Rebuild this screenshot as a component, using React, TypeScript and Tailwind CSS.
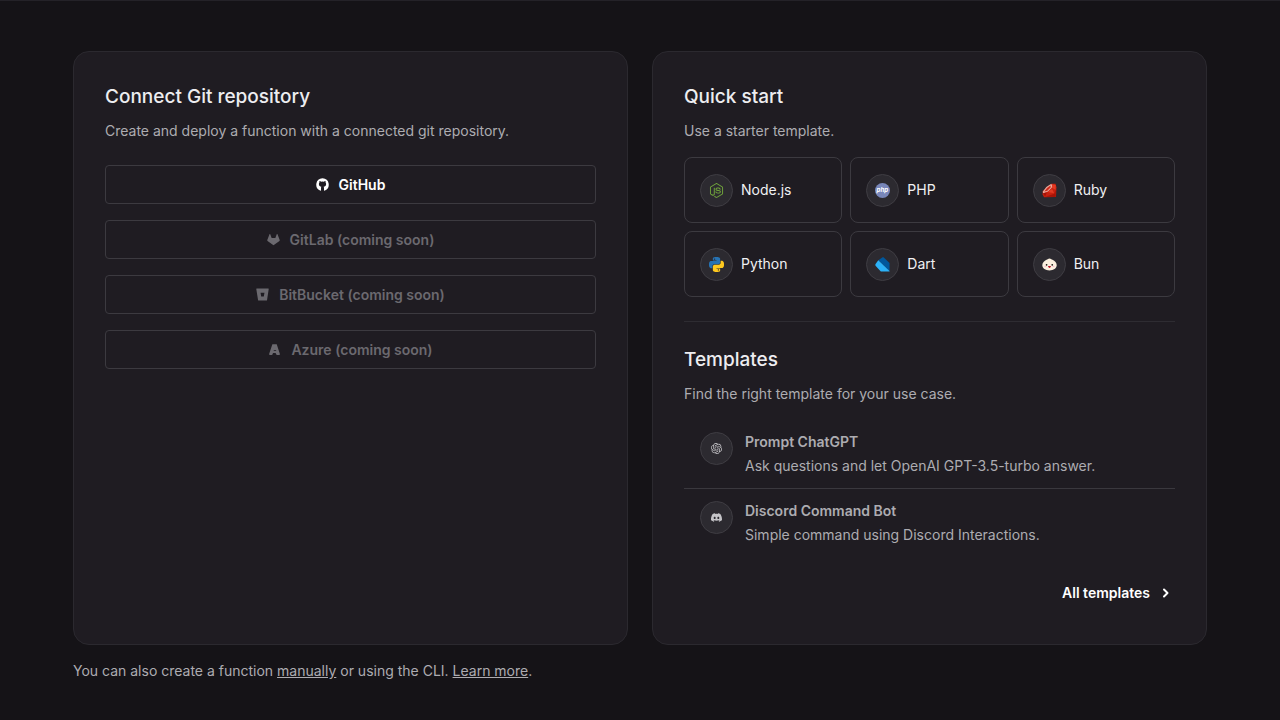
import type { ReactNode } from 'react';
import { FaNodeJs } from 'react-icons/fa';
import { SiDiscord, SiOpenai } from 'react-icons/si';

const PYTHON_SNAKE =
  'M14.25.18l.9.2.73.26.59.3.45.32.34.34.25.34.16.33.1.3.04.26.02.2-.01.13V8.5l-.05.63-.13.55-.21.46-.26.38-.3.31-.33.25-.35.19-.35.14-.33.1-.3.07-.26.04-.21.02H8.77l-.69.05-.59.14-.5.22-.41.27-.33.32-.27.35-.2.36-.15.37-.1.35-.07.32-.04.27-.02.21v3.06H3.17l-.21-.03-.28-.07-.32-.12-.35-.18-.36-.26-.36-.36-.35-.46-.32-.59-.28-.73-.21-.88-.14-1.05-.05-1.23.06-1.22.16-1.04.24-.87.32-.71.36-.57.4-.44.42-.33.42-.24.4-.16.36-.1.32-.05.24-.01h.16l.06.01h8.16v-.83H6.18l-.01-2.75-.02-.37.05-.34.11-.31.17-.28.25-.26.31-.23.38-.2.44-.18.51-.15.58-.12.64-.1.71-.06.77-.04.84-.02 1.27.05z';

function GithubIcon() {
  return (
    <svg viewBox="0 0 14 14" className="size-[13px]" fill="currentColor" aria-hidden="true">
      <path d="M7 .2a6.9 6.9 0 0 0-2.1 13.4c.3.1.5-.1.5-.4v-2.6c0-.5.2-.9.4-1.1-1.5-.2-2.7-.9-2.7-3 0-.7.2-1.2.6-1.6-.1-.5-.1-1.1.1-1.6.7 0 1.3.3 1.8.7a5.500 5.500 0 0 1 2.800 0c.5-.4 1.100-.7 1.800-.7.2.5.2 1.100.1 1.600.4.4.6.900.6 1.600 0 2.100-1.200 2.800-2.700 3 .2.200.4.600.4 1.100v2.600c0 .3.200.5.5.4A6.900 6.900 0 0 0 7 .2z" />
    </svg>
  );
}

function GitlabIcon() {
  return (
    <svg viewBox="0 0 14 14" className="size-[13px]" fill="currentColor" aria-hidden="true">
      <path d="M2.700 1.400c.2-.4.6-.4.8 0l1.500 3.900h4l1.500-3.900c.2-.4.6-.4.8 0l2.400 6.200c.1.4 0 .8-.3 1.100L7 13.200.6 8.700c-.3-.3-.4-.7-.3-1.100z" />
    </svg>
  );
}

function BitbucketIcon() {
  return (
    <svg viewBox="0 0 14 14" className="size-[13px]" fill="currentColor" aria-hidden="true">
      <path
        fillRule="evenodd"
        d="M.7.6h12.600c.3 0 .5.2.4.500l-1.800 11.800c0 .4-.3.600-.6.600H2.900c-.4 0-.7-.2-.7-.600L.3 1.100C.3.800.4.600.7.600zM4.900 5l.7 4.200h2.800L9.100 5z"
      />
    </svg>
  );
}

function AzureIcon() {
  return (
    <svg viewBox="0 0 14 14" className="size-[13px]" fill="currentColor" aria-hidden="true">
      <path d="M5.200 1.300h3.700c.3 0 .5.2.6.4l3.300 10.100c.2.500-.2 1-.7 1H9.700c-.4 0-.7-.2-.9-.6L8.200 10.800H5.400l-.5 1.400c-.1.400-.4.600-.8.600H1.900c-.5 0-.9-.5-.7-1l3.400-10.100c.1-.2.3-.4.6-.4z" />
      <path d="M6.200 8.100h2.600" stroke="#1f1c22" strokeWidth=".8" />
    </svg>
  );
}

function PhpIcon() {
  return (
    <svg viewBox="0 0 16 16" className="size-[15px]" aria-hidden="true">
      <circle cx="8" cy="8" r="8" fill="#7886b9" />
      <text x="7.8" y="9.800" textAnchor="middle" fontSize="6.600" fontWeight="700" fontStyle="italic" fontFamily="Inter, sans-serif" fill="#fff">
        php
      </text>
    </svg>
  );
}

function RubyIcon() {
  return (
    <svg viewBox="0 0 16 16" className="size-[15px]" aria-hidden="true">
      <path d="M10 .8 14.4.9 15.4 4.4 14.9 14.9 2.2 15.2.6 12.2.8 8.6z" fill="#c8210f" />
      <path d="M.8 9.200 4.600 4.300 9 1.400l2 .2-.5 3.500L6 9.400l-4.700 1.500z" fill="#e9a99c" />
      <path d="M2.400 9 5.400 5.200 9 2.700l.4 1.900-4 3.800z" fill="#cd2b1b" />
      <path d="m11 1.500 3.700.6-.3 5.200-4-2.200zM6 9.500l4.700-3.200L13 11z" fill="#e23a23" />
      <path d="m14.600 7-1.400 4.500-9.500 3.200 11 .2zM1.200 11l2.200 3.400L5 10z" fill="#a51408" />
    </svg>
  );
}

function PythonIcon() {
  return (
    <svg viewBox="0 0 24 24" className="size-[15px]" fillRule="evenodd" aria-hidden="true">
      <path d={PYTHON_SNAKE} fill="#2773b3" />
      <path d={PYTHON_SNAKE} fill="#ffc91f" transform="rotate(180 12 12)" />
      <circle cx="8.900" cy="3.400" r="1.100" fill="#2c2a30" />
      <circle cx="15.100" cy="20.600" r="1.100" fill="#2c2a30" />
    </svg>
  );
}

function DartIcon() {
  return (
    <svg viewBox="0 0 16 16" className="size-[15px]" aria-hidden="true">
      <path d="M3.500 3.500 7.700.6c.6-.4 1.400-.3 1.900.2l5.900 5.600v8.600z" fill="#01579b" />
      <path d="M3.500 3.500.6 7.500c-.4.700-.4 1.300.2 2l5.400 5.900h9.300v-.4z" fill="#2cb2f8" />
    </svg>
  );
}

function BunIcon() {
  return (
    <svg viewBox="0 0 16 16" className="size-[15px]" aria-hidden="true">
      <path d="M8 1.500c1.300.1 2 .9 3.200 1.500 2.600 1.300 4.500 3.100 4.500 5.800 0 3.300-3.400 5.500-7.700 5.500S.3 12.100.3 8.800c0-2.600 2.100-4.500 4.500-5.800C6 2.400 6.800 1.500 8 1.500z" fill="#fbf0df" />
      <circle cx="4.900" cy="8.300" r=".9" fill="#16130f" />
      <circle cx="10.900" cy="8.300" r=".9" fill="#16130f" />
      <ellipse cx="3.500" cy="10" rx="1" ry=".6" fill="#febbd0" />
      <ellipse cx="12.300" cy="10" rx="1" ry=".6" fill="#febbd0" />
      <path d="M6.400 9.700h3.100c-.1 1.200-.8 1.900-1.500 1.900s-1.500-.7-1.600-1.900z" fill="#b71422" />
    </svg>
  );
}

const providers: { label: string; icon: ReactNode; disabled?: boolean }[] = [
  { label: 'GitHub', icon: <GithubIcon /> },
  { label: 'GitLab (coming soon)', icon: <GitlabIcon />, disabled: true },
  { label: 'BitBucket (coming soon)', icon: <BitbucketIcon />, disabled: true },
  { label: 'Azure (coming soon)', icon: <AzureIcon />, disabled: true },
];

const starters: { label: string; icon: ReactNode }[] = [
  { label: 'Node.js', icon: <FaNodeJs className="size-[15px] text-[#70a33c]" aria-hidden="true" /> },
  { label: 'PHP', icon: <PhpIcon /> },
  { label: 'Ruby', icon: <RubyIcon /> },
  { label: 'Python', icon: <PythonIcon /> },
  { label: 'Dart', icon: <DartIcon /> },
  { label: 'Bun', icon: <BunIcon /> },
];

const templates: { title: string; text: string; icon: ReactNode }[] = [
  {
    title: 'Prompt ChatGPT',
    text: 'Ask questions and let OpenAI GPT-3.5-turbo answer.',
    icon: <SiOpenai className="size-[11px]" aria-hidden="true" />,
  },
  {
    title: 'Discord Command Bot',
    text: 'Simple command using Discord Interactions.',
    icon: <SiDiscord className="size-[11px]" aria-hidden="true" />,
  },
];

function Avatar({ children }: { children: ReactNode }) {
  return (
    <span className="flex size-[33px] shrink-0 items-center justify-center rounded-full border border-[#3f3d43] bg-[#2c2a30] text-[#c5c4c8]">
      {children}
    </span>
  );
}

function Card({ children }: { children: ReactNode }) {
  return (
    <section className="flex flex-col rounded-2xl border border-[#2b292f] bg-[#1f1c22] p-[31px]">{children}</section>
  );
}

function Heading({ title, text }: { title: string; text: string }) {
  return (
    <header className="flex flex-col gap-2.5">
      <h2 className="text-[19px] leading-7 font-medium text-[#ededf0]">{title}</h2>
      <p className="leading-5">{text}</p>
    </header>
  );
}

export default function App() {
  return (
    <main className="min-h-screen border-t border-[#242228] bg-[#151317] px-6 pt-[50px] pb-8 font-['Inter',sans-serif] text-sm text-[#adacb1]">
      <div className="mx-auto flex max-w-[1134px] flex-col gap-4">
        <div className="grid grid-cols-2 gap-6">
          <Card>
            <Heading title="Connect Git repository" text="Create and deploy a function with a connected git repository." />
            <div className="mt-6 flex flex-col gap-4">
              {providers.map((p) => (
                <button
                  key={p.label}
                  type="button"
                  disabled={p.disabled}
                  className="flex h-[39px] items-center justify-center gap-2.5 rounded border border-[#3c3a40] font-semibold text-white disabled:text-[#6b696f]"
                >
                  {p.icon}
                  {p.label}
                </button>
              ))}
            </div>
          </Card>

          <Card>
            <Heading title="Quick start" text="Use a starter template." />
            <div className="mt-4 grid grid-cols-3 gap-2">
              {starters.map((s) => (
                <button
                  key={s.label}
                  type="button"
                  className="flex h-[66px] items-center gap-2 rounded-lg border border-[#3c3a40] px-[15px] text-[#f0f0f2]"
                >
                  <Avatar>{s.icon}</Avatar>
                  {s.label}
                </button>
              ))}
            </div>
            <hr className="my-6 border-[#2e2c32]" />
            <Heading title="Templates" text="Find the right template for your use case." />
            <ul className="mt-4 flex flex-col divide-y divide-[#3a383e]">
              {templates.map((t) => (
                <li key={t.title}>
                  <a href="#template" className="flex gap-3 px-4 py-3">
                    <Avatar>{t.icon}</Avatar>
                    <span className="flex flex-col gap-1">
                      <span className="font-semibold">{t.title}</span>
                      <span>{t.text}</span>
                    </span>
                  </a>
                </li>
              ))}
            </ul>
            <a href="#templates" className="mt-4 flex h-10 items-center gap-3 self-end pr-1.5 font-semibold text-white">
              All templates
              <svg viewBox="0 0 7 10" className="h-2.5 w-[7px]" fill="none" stroke="currentColor" strokeWidth="2" strokeLinecap="round" strokeLinejoin="round" aria-hidden="true">
                <path d="m2 1.500 3.500 3.500-3.500 3.500" />
              </svg>
            </a>
          </Card>
        </div>
        <p>
          You can also create a function{' '}
          <a href="#manual" className="underline">
            manually
          </a>{' '}
          or using the CLI.{' '}
          <a href="#docs" className="underline">
            Learn more
          </a>
          .
        </p>
      </div>
    </main>
  );
}
